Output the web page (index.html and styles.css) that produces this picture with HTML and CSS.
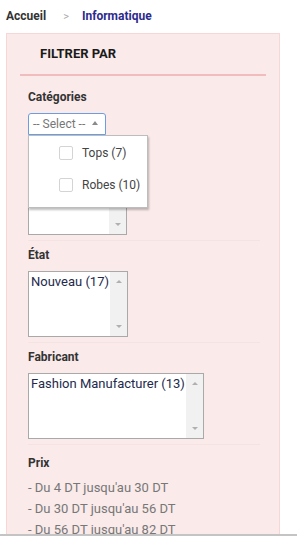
FILE: index.html
```html
<!DOCTYPE html>
<html>
<head>
    <title>Filtrer par</title>
    <link rel="stylesheet" href="styles.css">
</head>
<body>
    <div class="viewport">
        <!-- Fil d'Ariane -->
        <nav class="breadcrumb">
            <a href="#" class="crumb">Accueil</a>
            <span class="crumb-sep">&gt;</span>
            <a href="#" class="crumb crumb-current">Informatique</a>
        </nav>

        <!-- Bloc de filtres -->
        <aside class="filter-panel">
            <div class="filter-header">
                <h2>FILTRER PAR</h2>
            </div>

            <div class="filter-body">
                <div class="filter-block filter-first">
                    <h3>Catégories</h3>
                    <div class="select-wrap">
                        <button type="button" class="select-toggle">-- Select -- <span class="caret-up"></span></button>
                        <ul class="select-menu">
                            <li><label><span class="check"></span>Tops (7)</label></li>
                            <li><label><span class="check"></span>Robes (10)</label></li>
                        </ul>
                    </div>
                    <div class="listbox listbox-cat">
                        <div class="listbox-items"></div>
                        <div class="listbox-scroll"><span class="arr-up"></span><span class="arr-down"></span></div>
                    </div>
                </div>

                <div class="filter-block">
                    <h3>État</h3>
                    <div class="listbox listbox-small">
                        <div class="listbox-items">Nouveau (17)</div>
                        <div class="listbox-scroll"><span class="arr-up"></span><span class="arr-down"></span></div>
                    </div>
                </div>

                <div class="filter-block">
                    <h3>Fabricant</h3>
                    <div class="listbox listbox-wide">
                        <div class="listbox-items">Fashion Manufacturer (13)</div>
                        <div class="listbox-scroll"><span class="arr-up"></span><span class="arr-down"></span></div>
                    </div>
                </div>

                <div class="filter-block filter-prices">
                    <h3>Prix</h3>
                    <ul class="price-list">
                        <li>- Du 4 DT jusqu'au 30 DT</li>
                        <li>- Du 30 DT jusqu'au 56 DT</li>
                        <li>- Du 56 DT jusqu'au 82 DT</li>
                    </ul>
                </div>
            </div>
        </aside>
    </div>
</body>
</html>
```

FILE: styles.css
```css
/* Styles généraux */
:root {
    --rose-fond: #faeaea;
    --rose-bord: #f6d6d6;
    --rose-ligne: #f0bcbc;
    --texte: #222222;
    --gris: #777777;
    --indigo: #2d2a8e;
    --bord-liste: #a9a9a9;
}

* {
    margin: 0;
    padding: 0;
    box-sizing: border-box;
}

body {
    background: #ffffff;
    font-family: Roboto, 'Liberation Sans', sans-serif;
    color: var(--texte);
}

.viewport {
    height: 536px;
    overflow: hidden;
    border-bottom: 2px solid #c4c4c4;
}

/* Fil d'Ariane */
.breadcrumb {
    display: flex;
    align-items: center;
    padding: 6px 0 7px 6px;
    font-size: 12px;
    line-height: 18px;
    font-weight: 700;
}

.crumb {
    color: #333333;
    text-decoration: none;
}

.crumb-sep {
    color: #aaaaaa;
    font-weight: 400;
    font-size: 11px;
    margin: 2px 13px 0 17px;
}

.crumb-current {
    color: var(--indigo);
}

/* Panneau de filtres */
.filter-panel {
    margin-left: 6px;
    width: 274px;
    min-height: 520px;
    background: var(--rose-fond);
    border: 1px solid var(--rose-bord);
}

.filter-header {
    margin: 0 13px;
    padding: 12px 20px;
    border-bottom: 2px solid var(--rose-ligne);
}

.filter-header h2 {
    font-size: 13px;
    line-height: 16px;
    font-weight: 700;
    color: #1a1a1a;
}

.filter-body {
    padding: 0 19px 0 21px;
}

.filter-block {
    padding: 6px 0 5px;
    border-bottom: 1px solid #f5e2e2;
}

.filter-first {
    padding-top: 13px;
}

.filter-block h3 {
    font-size: 12px;
    line-height: 16px;
    font-weight: 700;
    color: #333333;
    margin-bottom: 8px;
}

/* Sélecteur déroulant */
.select-wrap {
    position: relative;
    width: 78px;
}

.select-toggle {
    display: flex;
    align-items: center;
    width: 78px;
    height: 22px;
    padding: 0 0 0 4px;
    background: #ffffff;
    border: 1px solid #6d9de0;
    border-radius: 3px 3px 0 0;
    font-family: Roboto, 'Liberation Sans', sans-serif;
    font-size: 12px;
    color: var(--gris);
    cursor: pointer;
}

.caret-up {
    margin-left: 7px;
    margin-bottom: 2px;
    border-left: 3.5px solid transparent;
    border-right: 3.5px solid transparent;
    border-bottom: 4px solid #8a8a8a;
}

.select-menu {
    position: absolute;
    top: 22px;
    left: 0;
    z-index: 10;
    width: 120px;
    height: 73px;
    list-style: none;
    padding: 1px 0 0;
    background: #ffffff;
    border: 1px solid #bdbdbd;
    box-shadow: 1px 2px 2px rgba(0, 0, 0, 0.25);
}

.select-menu li {
    height: 32px;
}

.select-menu label {
    display: flex;
    align-items: center;
    height: 32px;
    padding-left: 30px;
    font-size: 12px;
    color: #444444;
}

.check {
    width: 14px;
    height: 14px;
    margin-right: 9px;
    border: 1px solid #d4d4d4;
    border-radius: 2px;
    background: #ffffff;
}

/* Listes multiples */
.listbox {
    display: flex;
    height: 66px;
    background: #ffffff;
    border: 1px solid var(--bord-liste);
}

.listbox-cat {
    width: 99px;
    height: 96px;
    margin-top: 4px;
}

.listbox-small {
    width: 100px;
}

.listbox-wide {
    width: 176px;
}

.listbox-items {
    flex: 1;
    padding: 2px 0 0 2px;
    font-size: 13px;
    line-height: 16px;
    color: #232a4d;
    white-space: nowrap;
}

.listbox-scroll {
    width: 17px;
    background: #f1f1f1;
    display: flex;
    flex-direction: column;
    justify-content: space-between;
    align-items: center;
    padding: 8px 0 8px;
}

.arr-up {
    border-left: 3.5px solid transparent;
    border-right: 3.5px solid transparent;
    border-bottom: 3.5px solid #b0b0b0;
}

.arr-down {
    border-left: 3.5px solid transparent;
    border-right: 3.5px solid transparent;
    border-top: 3.5px solid #b0b0b0;
}

/* Prix */
.filter-prices {
    padding-top: 10px;
    border-bottom: none;
}

.filter-prices h3 {
    margin-bottom: 6px;
}

.price-list {
    list-style: none;
    font-size: 13px;
    line-height: 21px;
    color: var(--gris);
}
```
